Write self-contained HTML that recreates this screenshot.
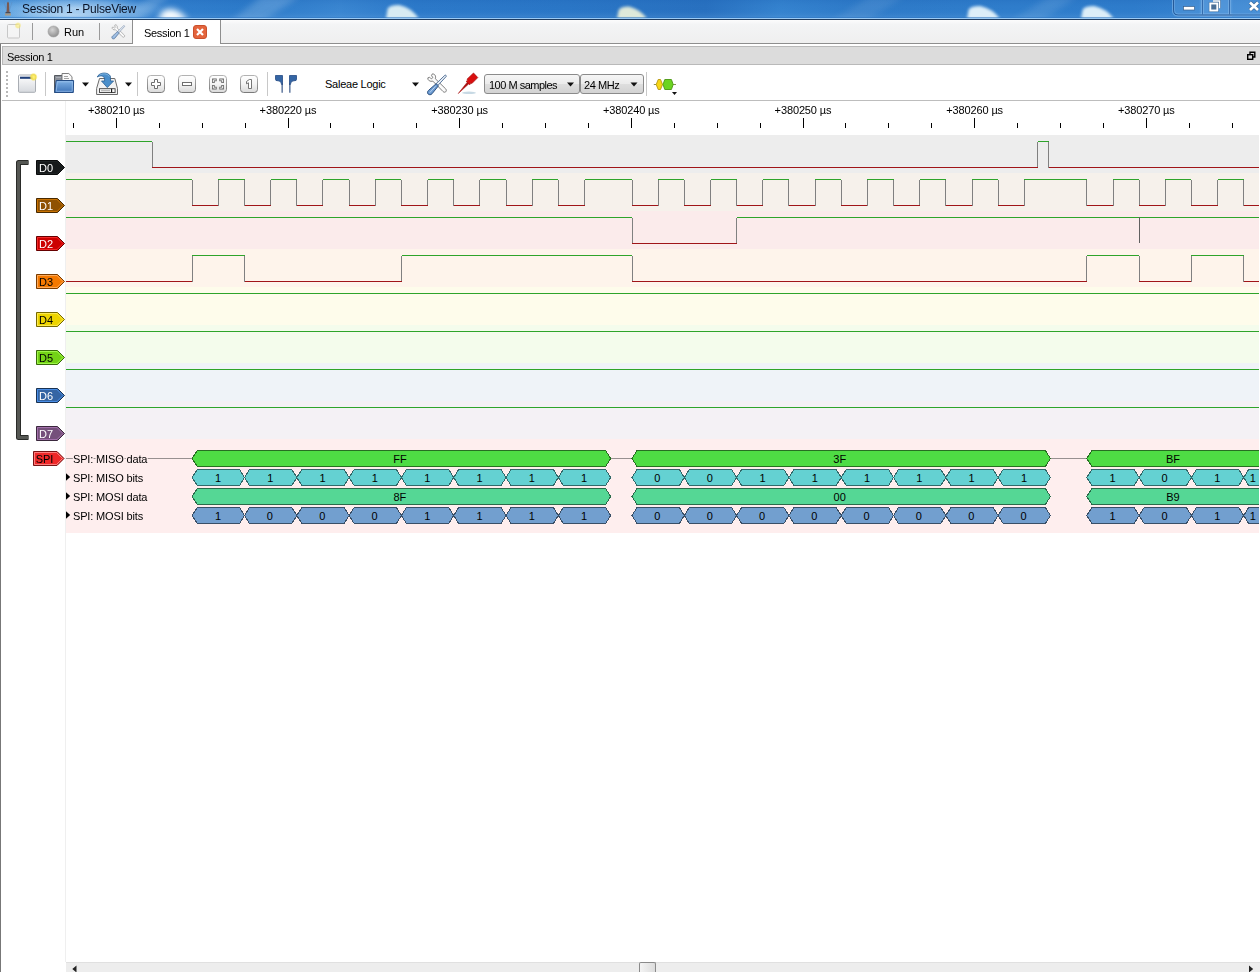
<!DOCTYPE html>
<html><head><meta charset="utf-8"><title>Session 1 - PulseView</title>
<style>
html,body{margin:0;padding:0;}
body{width:1260px;height:972px;overflow:hidden;background:#fff;font-family:"Liberation Sans",sans-serif;font-size:11px;color:#000;position:relative;}
.abs{position:absolute;}
#titlebar{left:0;top:0;width:1260px;height:19px;background:linear-gradient(180deg,#2b7ad0 0%,#3a88d6 60%,#4a93da 100%);overflow:hidden;}
#titleline{left:0;top:19px;width:1260px;height:1px;background:#203c5e;}
#tabbar{left:0;top:20px;width:1260px;height:23px;background:linear-gradient(180deg,#fcfcfc 0,#f3f4f5 20%,#efefef 100%);}
#tabline{left:0;top:43px;width:1260px;height:1px;background:#8e8e8e;}
#docktitle{left:2px;top:46px;width:1258px;height:19px;background:#dcdcdc;border:1px solid #b9b9b9;border-right:none;box-sizing:border-box;}
#leftedge{left:0;top:44px;width:1px;height:928px;background:#777;}
#tbline{left:2px;top:100px;width:1258px;height:1px;background:#bdbdbd;}
svg{position:absolute;left:0;top:0;}
svg text{font-family:"Liberation Sans",sans-serif;}
.txt{position:absolute;white-space:nowrap;line-height:1;}
</style></head><body>
<div id="titlebar" class="abs">
 <svg width="1260" height="19" viewBox="0 0 1260 19">
  <defs>
   <linearGradient id="tbg" x1="0" x2="1" y1="0" y2="0">
    <stop offset="0" stop-color="#5ea3e0"/><stop offset="0.05" stop-color="#4a94da"/><stop offset="0.12" stop-color="#327fcd"/><stop offset="0.2" stop-color="#2c7ac9"/>
    <stop offset="0.27" stop-color="#3a86d1"/><stop offset="0.33" stop-color="#2c79c9"/><stop offset="0.45" stop-color="#2a76c6"/><stop offset="0.56" stop-color="#2870bf"/><stop offset="0.62" stop-color="#3583cf"/><stop offset="0.68" stop-color="#2e7ac8"/><stop offset="0.8" stop-color="#2f7dcb"/><stop offset="0.9" stop-color="#2e7ccb"/><stop offset="1" stop-color="#3a86d2"/>
   </linearGradient>
   <linearGradient id="tbv" x1="0" x2="0" y1="0" y2="1">
    <stop offset="0" stop-color="#1c62b4" stop-opacity="0.25"/><stop offset="0.5" stop-color="#2c7ac9" stop-opacity="0"/><stop offset="1" stop-color="#8cc0ee" stop-opacity="0.25"/>
   </linearGradient>
   <radialGradient id="tglow" cx="0.5" cy="0.5" r="0.5"><stop offset="0" stop-color="#d8ebfa" stop-opacity="0.75"/><stop offset="0.6" stop-color="#a9d0f2" stop-opacity="0.45"/><stop offset="1" stop-color="#7fb6e8" stop-opacity="0"/></radialGradient>
   <filter id="bl" x="-30%" y="-60%" width="160%" height="220%"><feGaussianBlur stdDeviation="1.8"/></filter>
   <filter id="bl2" x="-30%" y="-60%" width="160%" height="220%"><feGaussianBlur stdDeviation="3"/></filter>
  </defs>
  <rect width="1260" height="19" fill="url(#tbg)"/>
  <rect width="1260" height="19" fill="url(#tbv)"/>
  <ellipse cx="78" cy="9" rx="88" ry="13" fill="url(#tglow)"/>
  <ellipse cx="70" cy="15" rx="75" ry="7" fill="url(#tglow)" opacity="0.8"/>
  <g filter="url(#bl2)" opacity="0.22" fill="#cfe6f8">
   <path d="M120 22L150 -4L170 -4L140 22Z"/>
   <path d="M230 22L262 -4L300 -4L262 22Z"/>
   <path d="M830 22L870 -4L905 -4L865 22Z" opacity="0.5"/>
   <path d="M1010 22L1050 -4L1078 -4L1040 22Z" opacity="0.6"/>
  </g>
  <g filter="url(#bl2)"><path d="M158 21L161 13Q164 8.500 172 9Q182 11 188 21Z" fill="#f4fbff"/><path d="M162 21L164 14Q168 11 174 12Q180 13 184 21Z" fill="#ffffff"/></g>
  <g filter="url(#bl)" opacity="0.92">
   <path d="M386 19L387.5 9Q389 5 399.2 5Q412.4 8 419 19Z" fill="#e6f5f6"/><path d="M617 19L618.5 10.5Q620 6.5 629.0 6.5Q641.0 9.5 647 19Z" fill="#eef3dc"/><path d="M967 19L968.5 10Q970 6 980.2 6Q993.4 9 1000 19Z" fill="#ecf8fc"/><path d="M1081 19L1082.5 10Q1084 6 1094.2 6Q1107.4 9 1114 19Z" fill="#ecf8fc"/>
  </g>
  <rect y="17" width="1260" height="1" fill="#2670c0" opacity="0.5"/><rect y="18" width="1260" height="1" fill="#9ccbf5"/>
 </svg>
</div>
<div id="titleline" class="abs"></div>
<div id="tabbar" class="abs"></div>
<div id="tabline" class="abs"></div>
<div class="abs" style="left:132px;top:20px;width:89px;height:24px;background:#fff;border:1px solid #8e8e8e;border-bottom:none;border-top:none;box-sizing:border-box;"></div>
<div id="docktitle" class="abs"></div>
<div id="leftedge" class="abs"></div>
<div id="tbline" class="abs"></div>

<div class="txt" id="t_title" style="left:22px;top:3px;font-size:12px;letter-spacing:-0.25px;color:#0a1428;">Session 1 - PulseView</div>
<div class="txt" id="t_run" style="left:64px;top:27px;font-size:11px;">Run</div>
<div class="txt" id="t_tab" style="left:144px;top:28px;font-size:11px;letter-spacing:-0.3px;">Session 1</div>
<div class="txt" id="t_dock" style="left:7px;top:52px;font-size:11px;letter-spacing:-0.3px;">Session 1</div>
<div class="txt" id="t_dev" style="left:325px;top:79px;font-size:11px;letter-spacing:-0.25px;">Saleae Logic</div>

<!-- chrome icons -->
<svg width="1260" height="102" viewBox="0 0 1260 102">
<defs>
 <linearGradient id="btn" x1="0" x2="0" y1="0" y2="1"><stop offset="0" stop-color="#ffffff"/><stop offset="0.5" stop-color="#f4f4f4"/><stop offset="1" stop-color="#d9d9d9"/></linearGradient>
 <linearGradient id="btnb" x1="0" x2="0" y1="0" y2="1"><stop offset="0" stop-color="#b2b2b2"/><stop offset="1" stop-color="#7a7a7a"/></linearGradient>
 <linearGradient id="fold" x1="0" x2="0" y1="0" y2="1"><stop offset="0" stop-color="#7fb0e4"/><stop offset="1" stop-color="#3d73b8"/></linearGradient>
 <linearGradient id="win" x1="0" x2="0" y1="0" y2="1"><stop offset="0" stop-color="#ffffff"/><stop offset="1" stop-color="#d6d9de"/></linearGradient>
 <radialGradient id="glow"><stop offset="0" stop-color="#fff27a"/><stop offset="0.6" stop-color="#f5e04a" stop-opacity="0.9"/><stop offset="1" stop-color="#f5e04a" stop-opacity="0"/></radialGradient>
 <radialGradient id="ball" cx="0.4" cy="0.35" r="0.7"><stop offset="0" stop-color="#d4d4d4"/><stop offset="1" stop-color="#8c8c8c"/></radialGradient>
 <linearGradient id="combo" x1="0" x2="0" y1="0" y2="1"><stop offset="0" stop-color="#f6f6f6"/><stop offset="0.5" stop-color="#ebebeb"/><stop offset="0.51" stop-color="#dedede"/><stop offset="1" stop-color="#d2d2d2"/></linearGradient>
</defs>
<!-- title bar app icon -->
<g>
 <path d="M7 3L8 1.5L9 3L9.5 12H6.5Z" fill="#7a5a52"/>
 <rect x="5.5" y="12" width="5" height="1.5" fill="#4a4a55"/>
 <rect x="5" y="13.5" width="6" height="2" fill="#a89a86"/>
 <path d="M4 2L6.5 10M12 2L9.5 10" stroke="#5f8fc4" stroke-width="1" opacity="0.6" fill="none"/>
</g>
<!-- window controls -->
<g>
 <path d="M1174.5 0V10.500Q1174.500 14.500 1178.500 14.500H1260V0Z" fill="#5fa0de" opacity="0.4"/>
 <path d="M1173.500 0V10.500Q1173.500 15 1178 15H1260" fill="none" stroke="#24548f" stroke-width="1" opacity="0.85"/>
 <path d="M1172.500 0V10.500Q1172.500 16 1178 16H1260" fill="none" stroke="#8cbcea" stroke-width="1" opacity="0.6"/>
 <path d="M1174.500 0V10.500Q1174.500 14 1178 14H1260" fill="none" stroke="#8cbcea" stroke-width="1" opacity="0.45"/>
 <path d="M1202.500 0V14.500M1229.500 0V14.500" stroke="#2c5f9e" stroke-width="1" opacity="0.7"/>
 <path d="M1203.500 0V14M1230.500 0V14M1201.500 0V14M1228.500 0V14" stroke="#9cc6ee" stroke-width="1" opacity="0.4"/>
 <rect x="1183.500" y="6.500" width="11" height="3.500" fill="#fff" stroke="#3a5f8a" stroke-width="0.7"/>
 <path d="M1213 1H1219.500V8.300" fill="none" stroke="#35587f" stroke-width="2.600" opacity="0.7"/>
 <path d="M1213 1H1219.500V8.300" fill="none" stroke="#fff" stroke-width="1.500"/>
 <rect x="1210.300" y="3.500" width="7" height="7" fill="none" stroke="#35587f" stroke-width="3" opacity="0.6"/>
 <rect x="1210.300" y="3.500" width="7" height="7" fill="#4a6f96" stroke="#fff" stroke-width="1.900"/>
 <path d="M1250 2.500L1258 10M1258 2.500L1250 10" stroke="#3a5f8a" stroke-width="4" fill="none" opacity="0.8"/>
 <path d="M1250 2.500L1258 10M1258 2.500L1250 10" stroke="#fff" stroke-width="2.700" fill="none"/>
</g>
<!-- tab bar: disabled new-window icon -->
<g opacity="0.8">
 <rect x="7.5" y="24.5" width="12" height="13.500" rx="1" fill="#f6f6f6" stroke="#bdbdbd"/>
 <circle cx="18" cy="25.5" r="3.5" fill="url(#glow)" opacity="0.7"/>
</g>
<path d="M32.5 23V40M99.5 23V40" stroke="#9a9a9a" stroke-width="1" fill="none"/>
<circle cx="53.5" cy="31.5" r="5.5" fill="url(#ball)" stroke="#a0a0a0" stroke-width="0.6"/>
<!-- tab bar: faded settings icon -->
<g opacity="0.75" transform="translate(111.5,24.5) scale(0.68)">
 
 <g>
  <path d="M5.300 0.400C7.800 0.200 9.300 2.800 8.300 5.200L18.700 15.400C19.600 16.400 19.500 17.600 18.700 18.300C17.900 19 16.800 18.800 16 18L5.800 7.600C3.300 8.500 0.600 6.900 0.800 4.400L2.600 3.700L4.300 5.400L5.900 4L4.500 2.200Z" fill="#fbfbfb" stroke="#6f6f6f" stroke-width="0.9" stroke-linejoin="round"/>
  <path d="M17.800 1.800C18.600 1.200 19.600 2.100 19.200 3L10.800 12L9 10.300Z" fill="#e8eef5" stroke="#4a6a93" stroke-width="0.9"/>
  <path d="M9.200 10.200L11.400 12.400L5 20.300C3.800 21.600 2 21.500 1.100 20.500C0.200 19.500 0.300 17.900 1.600 16.800Z" fill="#6a9ad2" stroke="#2f527f" stroke-width="1"/>
  <path d="M3 18.800L8.300 13" stroke="#b8d2ee" stroke-width="1" fill="none" stroke-linecap="round"/>
 </g>

</g>
<!-- tab close button -->
<rect x="193.5" y="25.5" width="13" height="13" rx="2.5" fill="#e4643c" stroke="#c9502c"/>
<path d="M197 29L203 35M203 29L197 35" stroke="#fff" stroke-width="2.2" fill="none"/>
<!-- dock float icon -->
<g fill="none" stroke="#000" stroke-width="1.4">
 <path d="M1250 54V52.2H1254.8V57H1253"/>
 <rect x="1247.7" y="54.7" width="5" height="4.6" fill="#dcdcdc"/>
</g>
<!-- toolbar handle -->
<g fill="#b8b8b8">
 <rect x="6" y="71" width="2" height="2"/><rect x="6" y="75" width="2" height="2"/><rect x="6" y="79" width="2" height="2"/><rect x="6" y="83" width="2" height="2"/><rect x="6" y="87" width="2" height="2"/><rect x="6" y="91" width="2" height="2"/><rect x="6" y="95" width="2" height="2"/>
</g>
<!-- new window icon -->
<rect x="18.5" y="75" width="17" height="17.300" rx="1" fill="url(#win)" stroke="#a9adb3"/>
<rect x="20" y="76.700" width="13" height="2.100" fill="#1f3f7a"/>
<circle cx="33.5" cy="77" r="4.2" fill="url(#glow)"/>
<!-- separators -->
<path d="M45.5 72V96M137.5 72V96M267.5 72V96M646.5 72V96" stroke="#c8c8c8" fill="none"/>
<!-- open icon -->
<g>
 <path d="M54.500 75.500H62.500V81H72.500V92.500H54.500Z" fill="#8a8f98" stroke="#55595f"/>
 <path d="M56 77.500H61" stroke="#a9adb4" fill="none"/>
 <path d="M62 73.500H68.800L72 76.700V84H62Z" fill="#fafafa" stroke="#6f6f6f" stroke-width="0.9"/>
 <path d="M64 76.500H68M64 78.500H69" stroke="#9a9a9a" fill="none" stroke-width="0.9"/>
 <path d="M56.200 80.500H73.600L73.300 92.500H54.700Z" fill="url(#fold)" stroke="#244d86" stroke-linejoin="round"/>
 <path d="M57.300 81.800H72.400L72.200 91.300H56.200Z" fill="none" stroke="#a6c8ef" stroke-width="0.8" opacity="0.8"/>
</g>
<path d="M82 82.500H89L85.500 86.500Z" fill="#111"/>
<!-- save icon -->
<g>
 <path d="M99.500 78.500H114.800L117.500 88.500V94.500H96.600V88.500Z" fill="#f3f3f3" stroke="#6a6a6a" stroke-linejoin="round"/>
 <rect x="99.500" y="88.700" width="15.600" height="3.800" fill="#f8f8f8" stroke="#3c3c3c" stroke-width="0.9"/>
 <path d="M101 90.600H110" stroke="#b9b9b9" stroke-width="1.400" fill="none"/>
 <path d="M111.600 88.700V92.500" stroke="#111" stroke-width="1.100" fill="none"/>
 <path d="M97.300 77C98.500 73 107 71 110.300 76L110.600 81H113.600L107.300 87.600L101.500 81H104.600L104.500 78C103.200 75.300 99.500 75.500 97.300 77Z" fill="#4b8fcb" stroke="#2b6094" stroke-width="0.8" stroke-linejoin="round"/>
 <path d="M99.500 75.300C102 73.300 107.500 73 109.300 76.500" fill="none" stroke="#8fc0e8" stroke-width="0.8"/>
</g>
<path d="M125 82.500H132L128.500 86.500Z" fill="#111"/>
<!-- zoom buttons -->
<g>
 <rect x="147.500" y="75.500" width="17" height="17" rx="3.2" fill="url(#btn)" stroke="url(#btnb)"/><rect x="178.500" y="75.500" width="17" height="17" rx="3.2" fill="url(#btn)" stroke="url(#btnb)"/><rect x="209.500" y="75.500" width="17" height="17" rx="3.2" fill="url(#btn)" stroke="url(#btnb)"/><rect x="240.500" y="75.500" width="17" height="17" rx="3.2" fill="url(#btn)" stroke="url(#btnb)"/>
 <path d="M154.500 79.500H157.500V82.500H160.500V85.500H157.500V88.500H154.500V85.500H151.500V82.500H154.500Z" fill="#fff" stroke="#6e6e6e" stroke-width="1"/>
 <rect x="182.500" y="82.500" width="9" height="3" fill="#fff" stroke="#6e6e6e" stroke-width="1"/>
 <path d="M213.400 83V79.900H216.700M222.600 83V79.900H219.300M213.400 85V88.100H216.700M222.600 85V88.100H219.300" fill="none" stroke="#666" stroke-width="2.600"/>
 <path d="M213.400 82.200V79.900H215.900M222.600 82.200V79.900H220.100M213.400 85.800V88.100H215.900M222.600 85.800V88.100H220.100" fill="none" stroke="#fff" stroke-width="0.900"/>
 <path d="M246.500 81.500L249.300 79.500H251.500V88.500H248.500V82.800L246.500 83.800Z" fill="#fff" stroke="#666" stroke-width="0.9"/>
</g>
<!-- cursors icon -->
<g fill="#3465a4" stroke="#234a85" stroke-width="0.8">
 <path d="M275.500 75.500H282.500V84.500H281.700Q281.300 80.700 278 80.700H277Q275.500 80.700 275.500 79.200Z"/>
 <path d="M296.500 75.500H289.500V84.500H290.300Q290.700 80.700 294 80.700H295Q296.500 80.700 296.500 79.200Z"/>
</g>
<path d="M281.600 83.500H282.650V92.700H281.600ZM289.350 83.500H290.400V92.700H289.350Z" fill="#1f4178"/>
<!-- device dropdown arrow -->
<path d="M412 82.500H419L415.500 86.500Z" fill="#111"/>
<!-- tools icon -->

<g transform="translate(427,73.500)">
 <g>
  <path d="M5.300 0.400C7.800 0.200 9.300 2.800 8.300 5.200L18.700 15.400C19.600 16.400 19.500 17.600 18.700 18.300C17.900 19 16.800 18.800 16 18L5.800 7.600C3.300 8.500 0.600 6.900 0.800 4.400L2.600 3.700L4.300 5.400L5.900 4L4.500 2.200Z" fill="#fbfbfb" stroke="#6f6f6f" stroke-width="0.9" stroke-linejoin="round"/>
  <path d="M17.800 1.800C18.600 1.200 19.600 2.100 19.200 3L10.800 12L9 10.300Z" fill="#e8eef5" stroke="#4a6a93" stroke-width="0.9"/>
  <path d="M9.200 10.200L11.400 12.400L5 20.300C3.800 21.600 2 21.500 1.100 20.500C0.200 19.500 0.300 17.900 1.600 16.800Z" fill="#6a9ad2" stroke="#2f527f" stroke-width="1"/>
  <path d="M3 18.800L8.300 13" stroke="#b8d2ee" stroke-width="1" fill="none" stroke-linecap="round"/>
 </g>
</g>
<!-- probe icon -->
<g>
 <ellipse cx="469" cy="92.800" rx="7" ry="1.300" fill="#a9c4d6" opacity="0.65"/>
 <path d="M458.200 93.600L467.200 82.200L468.900 83.800Z" fill="#a80c0c" stroke="#a80c0c" stroke-width="0.5"/>
 <path d="M473.500 73L477.800 77.600L471.800 83.600L470.800 82.800L469.800 84.800L466.200 81.300L467.800 80.200L467 79.200Z" fill="#d90f0f" stroke="#a30b0b" stroke-width="0.7" stroke-linejoin="round"/>
</g>
<!-- combos -->
<rect x="484.500" y="74.500" width="95" height="19" rx="2.500" fill="url(#combo)" stroke="#8b8b8b"/>
<rect x="580.500" y="74.500" width="63" height="19" rx="2.500" fill="url(#combo)" stroke="#8b8b8b"/>
<path d="M567 82.500H574L570.500 86.500Z M630.500 82.500H637.500L634 86.500Z" fill="#111"/>
<!-- decoder icon -->
<g>
 <path d="M653.800 84.500H656.500M673 84.500H676" stroke="#8a8f55" fill="none"/>
 <path d="M656.200 84.500L658.200 79.500H660.500L662.500 84.500L660.500 89.500H658.200Z" fill="#f7d615" stroke="#b5960f" stroke-width="0.9"/>
 <path d="M663 84.500L664.800 79.500H671.400L673.200 84.500L671.400 89.500H664.800Z" fill="#6bd421" stroke="#4a9612" stroke-width="0.9"/>
 <path d="M672 92H677L674.500 95Z" fill="#111"/>
</g>

</svg>

<div class="txt" id="t_c1" style="left:489px;top:80px;font-size:11px;letter-spacing:-0.5px;z-index:5;">100 M samples</div>
<div class="txt" id="t_c2" style="left:584px;top:80px;font-size:11px;letter-spacing:-0.45px;z-index:5;">24 MHz</div>
<!-- trace view -->
<svg width="1260" height="972" viewBox="0 0 1260 972" shape-rendering="crispEdges">
<rect x="66" y="135" width="1193" height="38" fill="#EDEDED"/>
<rect x="66" y="173" width="1193" height="38" fill="#F6F1EB"/>
<rect x="66" y="211" width="1193" height="38" fill="#FBEBEB"/>
<rect x="66" y="249" width="1193" height="38" fill="#FEF4EB"/>
<rect x="66" y="287" width="1193" height="38" fill="#FEFCEB"/>
<rect x="66" y="325" width="1193" height="38" fill="#F4FCEC"/>
<rect x="66" y="363" width="1193" height="38" fill="#EFF3F8"/>
<rect x="66" y="401" width="1193" height="38" fill="#F4F1F5"/>
<rect x="66" y="439" width="1193" height="94" fill="#FEEEEE"/>
<path d="M152.3 141.5V167.5M1037.8 141.5V167.5M1048.6 141.5V167.5" stroke="#808080" fill="none"/>
<path d="M66.0 141.5H152.3M1037.8 141.5H1048.6" stroke="#2ea42a" fill="none"/>
<path d="M152.3 167.5H1037.8M1048.6 167.5H1259.0" stroke="#a01518" fill="none"/>
<path d="M192.2 179.5V205.5M218.3 179.5V205.5M244.5 179.5V205.5M270.6 179.5V205.5M296.8 179.5V205.5M322.9 179.5V205.5M349.1 179.5V205.5M375.2 179.5V205.5M401.4 179.5V205.5M427.5 179.5V205.5M453.7 179.5V205.5M479.8 179.5V205.5M506.0 179.5V205.5M532.1 179.5V205.5M558.3 179.5V205.5M584.5 179.5V205.5M632.0 179.5V205.5M658.1 179.5V205.5M684.3 179.5V205.5M710.5 179.5V205.5M736.6 179.5V205.5M762.8 179.5V205.5M788.9 179.5V205.5M815.0 179.5V205.5M841.2 179.5V205.5M867.4 179.5V205.5M893.5 179.5V205.5M919.6 179.5V205.5M945.8 179.5V205.5M972.0 179.5V205.5M998.1 179.5V205.5M1024.2 179.5V205.5M1086.8 179.5V205.5M1113.0 179.5V205.5M1139.1 179.5V205.5M1165.2 179.5V205.5M1191.4 179.5V205.5M1217.5 179.5V205.5M1243.7 179.5V205.5" stroke="#808080" fill="none"/>
<path d="M66.0 179.5H192.2M218.3 179.5H244.5M270.6 179.5H296.8M322.9 179.5H349.1M375.2 179.5H401.4M427.5 179.5H453.7M479.8 179.5H506.0M532.1 179.5H558.3M584.5 179.5H632.0M658.1 179.5H684.3M710.5 179.5H736.6M762.8 179.5H788.9M815.0 179.5H841.2M867.4 179.5H893.5M919.6 179.5H945.8M972.0 179.5H998.1M1024.2 179.5H1086.8M1113.0 179.5H1139.1M1165.2 179.5H1191.4M1217.5 179.5H1243.7" stroke="#2ea42a" fill="none"/>
<path d="M192.2 205.5H218.3M244.5 205.5H270.6M296.8 205.5H322.9M349.1 205.5H375.2M401.4 205.5H427.5M453.7 205.5H479.8M506.0 205.5H532.1M558.3 205.5H584.5M632.0 205.5H658.1M684.3 205.5H710.5M736.6 205.5H762.8M788.9 205.5H815.0M841.2 205.5H867.4M893.5 205.5H919.6M945.8 205.5H972.0M998.1 205.5H1024.2M1086.8 205.5H1113.0M1139.1 205.5H1165.2M1191.4 205.5H1217.5M1243.7 205.5H1259.0" stroke="#a01518" fill="none"/>
<path d="M632.0 217.5V243.5M736.6 217.5V243.5" stroke="#808080" fill="none"/>
<path d="M66.0 217.5H632.0M736.6 217.5H1259.0" stroke="#2ea42a" fill="none"/>
<path d="M632.0 243.5H736.6" stroke="#a01518" fill="none"/>
<path d="M192.2 255.5V281.5M244.5 255.5V281.5M401.6 255.5V281.5M632.0 255.5V281.5M1086.8 255.5V281.5M1139.1 255.5V281.5M1191.4 255.5V281.5M1243.7 255.5V281.5" stroke="#808080" fill="none"/>
<path d="M192.2 255.5H244.5M401.6 255.5H632.0M1086.8 255.5H1139.1M1191.4 255.5H1243.7" stroke="#2ea42a" fill="none"/>
<path d="M66.0 281.5H192.2M244.5 281.5H401.6M632.0 281.5H1086.8M1139.1 281.5H1191.4M1243.7 281.5H1259.0" stroke="#a01518" fill="none"/>
<path d="M66.0 293.5H1259.0" stroke="#2ea42a" fill="none"/>
<path d="M66.0 331.5H1259.0" stroke="#2ea42a" fill="none"/>
<path d="M66.0 369.5H1259.0" stroke="#2ea42a" fill="none"/>
<path d="M66.0 407.5H1259.0" stroke="#2ea42a" fill="none"/>
<path d="M1139.5 217V243" stroke="#606060" fill="none"/>
<path d="M66 458.5H192M611 458.5H632M1051 458.5H1087" stroke="#989090" fill="none"/>
<g font-size="11" fill="#000">
<polygon points="192.2,458.5 197.2,450.5 605.6,450.5 610.6,458.5 605.6,466.5 197.2,466.5" fill="#4EDC44" stroke="#276E22"/>
<polygon points="192.2,496.5 197.2,488.5 605.6,488.5 610.6,496.5 605.6,504.5 197.2,504.5" fill="#55D795" stroke="#2A6B4A"/>
<text x="399.9" y="462.5" text-anchor="middle">FF</text>
<text x="399.9" y="500.5" text-anchor="middle">8F</text>
<polygon points="192.2,477.5 197.2,469.5 239.5,469.5 244.5,477.5 239.5,485.5 197.2,485.5" fill="#64D1D2" stroke="#326869"/><text x="218.0" y="481.5" text-anchor="middle">1</text>
<polygon points="244.5,477.5 249.5,469.5 291.8,469.5 296.8,477.5 291.8,485.5 249.5,485.5" fill="#64D1D2" stroke="#326869"/><text x="270.3" y="481.5" text-anchor="middle">1</text>
<polygon points="296.8,477.5 301.8,469.5 344.1,469.5 349.1,477.5 344.1,485.5 301.8,485.5" fill="#64D1D2" stroke="#326869"/><text x="322.6" y="481.5" text-anchor="middle">1</text>
<polygon points="349.1,477.5 354.1,469.5 396.4,469.5 401.4,477.5 396.4,485.5 354.1,485.5" fill="#64D1D2" stroke="#326869"/><text x="374.9" y="481.5" text-anchor="middle">1</text>
<polygon points="401.4,477.5 406.4,469.5 448.7,469.5 453.7,477.5 448.7,485.5 406.4,485.5" fill="#64D1D2" stroke="#326869"/><text x="427.2" y="481.5" text-anchor="middle">1</text>
<polygon points="453.7,477.5 458.7,469.5 501.0,469.5 506.0,477.5 501.0,485.5 458.7,485.5" fill="#64D1D2" stroke="#326869"/><text x="479.5" y="481.5" text-anchor="middle">1</text>
<polygon points="506.0,477.5 511.0,469.5 553.3,469.5 558.3,477.5 553.3,485.5 511.0,485.5" fill="#64D1D2" stroke="#326869"/><text x="531.9" y="481.5" text-anchor="middle">1</text>
<polygon points="558.3,477.5 563.3,469.5 605.6,469.5 610.6,477.5 605.6,485.5 563.3,485.5" fill="#64D1D2" stroke="#326869"/><text x="584.1" y="481.5" text-anchor="middle">1</text>
<polygon points="192.2,515.5 197.2,507.5 239.5,507.5 244.5,515.5 239.5,523.5 197.2,523.5" fill="#729FCF" stroke="#394F67"/><text x="218.0" y="519.5" text-anchor="middle">1</text>
<polygon points="244.5,515.5 249.5,507.5 291.8,507.5 296.8,515.5 291.8,523.5 249.5,523.5" fill="#729FCF" stroke="#394F67"/><text x="269.9" y="519.5" text-anchor="middle">0</text>
<polygon points="296.8,515.5 301.8,507.5 344.1,507.5 349.1,515.5 344.1,523.5 301.8,523.5" fill="#729FCF" stroke="#394F67"/><text x="322.2" y="519.5" text-anchor="middle">0</text>
<polygon points="349.1,515.5 354.1,507.5 396.4,507.5 401.4,515.5 396.4,523.5 354.1,523.5" fill="#729FCF" stroke="#394F67"/><text x="374.6" y="519.5" text-anchor="middle">0</text>
<polygon points="401.4,515.5 406.4,507.5 448.7,507.5 453.7,515.5 448.7,523.5 406.4,523.5" fill="#729FCF" stroke="#394F67"/><text x="427.2" y="519.5" text-anchor="middle">1</text>
<polygon points="453.7,515.5 458.7,507.5 501.0,507.5 506.0,515.5 501.0,523.5 458.7,523.5" fill="#729FCF" stroke="#394F67"/><text x="479.5" y="519.5" text-anchor="middle">1</text>
<polygon points="506.0,515.5 511.0,507.5 553.3,507.5 558.3,515.5 553.3,523.5 511.0,523.5" fill="#729FCF" stroke="#394F67"/><text x="531.9" y="519.5" text-anchor="middle">1</text>
<polygon points="558.3,515.5 563.3,507.5 605.6,507.5 610.6,515.5 605.6,523.5 563.3,523.5" fill="#729FCF" stroke="#394F67"/><text x="584.1" y="519.5" text-anchor="middle">1</text>
<polygon points="632.0,458.5 637.0,450.5 1045.4,450.5 1050.4,458.5 1045.4,466.5 637.0,466.5" fill="#4EDC44" stroke="#276E22"/>
<polygon points="632.0,496.5 637.0,488.5 1045.4,488.5 1050.4,496.5 1045.4,504.5 637.0,504.5" fill="#55D795" stroke="#2A6B4A"/>
<text x="839.7" y="462.5" text-anchor="middle">3F</text>
<text x="839.7" y="500.5" text-anchor="middle">00</text>
<polygon points="632.0,477.5 637.0,469.5 679.3,469.5 684.3,477.5 679.3,485.5 637.0,485.5" fill="#64D1D2" stroke="#326869"/><text x="657.4" y="481.5" text-anchor="middle">0</text>
<polygon points="684.3,477.5 689.3,469.5 731.6,469.5 736.6,477.5 731.6,485.5 689.3,485.5" fill="#64D1D2" stroke="#326869"/><text x="709.8" y="481.5" text-anchor="middle">0</text>
<polygon points="736.6,477.5 741.6,469.5 783.9,469.5 788.9,477.5 783.9,485.5 741.6,485.5" fill="#64D1D2" stroke="#326869"/><text x="762.5" y="481.5" text-anchor="middle">1</text>
<polygon points="788.9,477.5 793.9,469.5 836.2,469.5 841.2,477.5 836.2,485.5 793.9,485.5" fill="#64D1D2" stroke="#326869"/><text x="814.8" y="481.5" text-anchor="middle">1</text>
<polygon points="841.2,477.5 846.2,469.5 888.5,469.5 893.5,477.5 888.5,485.5 846.2,485.5" fill="#64D1D2" stroke="#326869"/><text x="867.1" y="481.5" text-anchor="middle">1</text>
<polygon points="893.5,477.5 898.5,469.5 940.8,469.5 945.8,477.5 940.8,485.5 898.5,485.5" fill="#64D1D2" stroke="#326869"/><text x="919.4" y="481.5" text-anchor="middle">1</text>
<polygon points="945.8,477.5 950.8,469.5 993.1,469.5 998.1,477.5 993.1,485.5 950.8,485.5" fill="#64D1D2" stroke="#326869"/><text x="971.6" y="481.5" text-anchor="middle">1</text>
<polygon points="998.1,477.5 1003.1,469.5 1045.4,469.5 1050.4,477.5 1045.4,485.5 1003.1,485.5" fill="#64D1D2" stroke="#326869"/><text x="1024.0" y="481.5" text-anchor="middle">1</text>
<polygon points="632.0,515.5 637.0,507.5 679.3,507.5 684.3,515.5 679.3,523.5 637.0,523.5" fill="#729FCF" stroke="#394F67"/><text x="657.4" y="519.5" text-anchor="middle">0</text>
<polygon points="684.3,515.5 689.3,507.5 731.6,507.5 736.6,515.5 731.6,523.5 689.3,523.5" fill="#729FCF" stroke="#394F67"/><text x="709.8" y="519.5" text-anchor="middle">0</text>
<polygon points="736.6,515.5 741.6,507.5 783.9,507.5 788.9,515.5 783.9,523.5 741.6,523.5" fill="#729FCF" stroke="#394F67"/><text x="762.0" y="519.5" text-anchor="middle">0</text>
<polygon points="788.9,515.5 793.9,507.5 836.2,507.5 841.2,515.5 836.2,523.5 793.9,523.5" fill="#729FCF" stroke="#394F67"/><text x="814.3" y="519.5" text-anchor="middle">0</text>
<polygon points="841.2,515.5 846.2,507.5 888.5,507.5 893.5,515.5 888.5,523.5 846.2,523.5" fill="#729FCF" stroke="#394F67"/><text x="866.6" y="519.5" text-anchor="middle">0</text>
<polygon points="893.5,515.5 898.5,507.5 940.8,507.5 945.8,515.5 940.8,523.5 898.5,523.5" fill="#729FCF" stroke="#394F67"/><text x="918.9" y="519.5" text-anchor="middle">0</text>
<polygon points="945.8,515.5 950.8,507.5 993.1,507.5 998.1,515.5 993.1,523.5 950.8,523.5" fill="#729FCF" stroke="#394F67"/><text x="971.2" y="519.5" text-anchor="middle">0</text>
<polygon points="998.1,515.5 1003.1,507.5 1045.4,507.5 1050.4,515.5 1045.4,523.5 1003.1,523.5" fill="#729FCF" stroke="#394F67"/><text x="1023.5" y="519.5" text-anchor="middle">0</text>
<polygon points="1086.8,458.5 1091.8,450.5 1500.2,450.5 1505.2,458.5 1500.2,466.5 1091.8,466.5" fill="#4EDC44" stroke="#276E22"/>
<polygon points="1086.8,496.5 1091.8,488.5 1500.2,488.5 1505.2,496.5 1500.2,504.5 1091.8,504.5" fill="#55D795" stroke="#2A6B4A"/>
<text x="1173.0" y="462.5" text-anchor="middle">BF</text>
<text x="1173.0" y="500.5" text-anchor="middle">B9</text>
<polygon points="1086.8,477.5 1091.8,469.5 1134.1,469.5 1139.1,477.5 1134.1,485.5 1091.8,485.5" fill="#64D1D2" stroke="#326869"/><text x="1112.6" y="481.5" text-anchor="middle">1</text>
<polygon points="1139.1,477.5 1144.1,469.5 1186.4,469.5 1191.4,477.5 1186.4,485.5 1144.1,485.5" fill="#64D1D2" stroke="#326869"/><text x="1164.5" y="481.5" text-anchor="middle">0</text>
<polygon points="1191.4,477.5 1196.4,469.5 1238.7,469.5 1243.7,477.5 1238.7,485.5 1196.4,485.5" fill="#64D1D2" stroke="#326869"/><text x="1217.2" y="481.5" text-anchor="middle">1</text>
<polygon points="1243.7,477.5 1248.7,469.5 1291.0,469.5 1296.0,477.5 1291.0,485.5 1248.7,485.5" fill="#64D1D2" stroke="#326869"/><text x="1252.8" y="481.5" text-anchor="middle">1</text>
<polygon points="1086.8,515.5 1091.8,507.5 1134.1,507.5 1139.1,515.5 1134.1,523.5 1091.8,523.5" fill="#729FCF" stroke="#394F67"/><text x="1112.6" y="519.5" text-anchor="middle">1</text>
<polygon points="1139.1,515.5 1144.1,507.5 1186.4,507.5 1191.4,515.5 1186.4,523.5 1144.1,523.5" fill="#729FCF" stroke="#394F67"/><text x="1164.5" y="519.5" text-anchor="middle">0</text>
<polygon points="1191.4,515.5 1196.4,507.5 1238.7,507.5 1243.7,515.5 1238.7,523.5 1196.4,523.5" fill="#729FCF" stroke="#394F67"/><text x="1217.2" y="519.5" text-anchor="middle">1</text>
<polygon points="1243.7,515.5 1248.7,507.5 1291.0,507.5 1296.0,515.5 1291.0,523.5 1248.7,523.5" fill="#729FCF" stroke="#394F67"/><text x="1252.8" y="519.5" text-anchor="middle">1</text>
</g>
<rect x="1259" y="130" width="1" height="832" fill="#fff"/>
</svg>
<svg width="1260" height="972" viewBox="0 0 1260 972">
<path d="M73.5 123V128M116.5 118V128M159.5 123V128M202.5 123V128M245.5 123V128M288.5 118V128M330.5 123V128M373.5 123V128M416.5 123V128M459.5 118V128M502.5 123V128M545.5 123V128M588.5 123V128M631.5 118V128M674.5 123V128M717.5 123V128M760.5 123V128M803.5 118V128M845.5 123V128M888.5 123V128M931.5 123V128M974.5 118V128M1017.5 123V128M1060.5 123V128M1103.5 123V128M1146.5 118V128M1189.5 123V128M1232.5 123V128" stroke="#000" fill="none"/>
<g font-size="11" fill="#000" letter-spacing="-0.12"><text x="116.3" y="114" text-anchor="middle">+380210 µs</text><text x="288.0" y="114" text-anchor="middle">+380220 µs</text><text x="459.6" y="114" text-anchor="middle">+380230 µs</text><text x="631.3" y="114" text-anchor="middle">+380240 µs</text><text x="803.0" y="114" text-anchor="middle">+380250 µs</text><text x="974.6" y="114" text-anchor="middle">+380260 µs</text><text x="1146.3" y="114" text-anchor="middle">+380270 µs</text></g>
<polygon points="36.5,160.5 57.5,160.5 64.5,167.5 57.5,174.5 36.5,174.5" fill="#16191A" stroke="#0b0c0d"/>
<polygon points="37.5,161.5 57,161.5 63,167.5 57,173.5 37.5,173.5" fill="none" stroke="#212527" stroke-opacity="0.8"/>
<text x="46" y="171.5" text-anchor="middle" fill="#fff" font-size="11">D0</text>
<polygon points="36.5,198.5 57.5,198.5 64.5,205.5 57.5,212.5 36.5,212.5" fill="#8F5202" stroke="#472900"/>
<polygon points="37.5,199.5 57,199.5 63,205.5 57,211.5 37.5,211.5" fill="none" stroke="#d67b02" stroke-opacity="0.8"/>
<text x="46" y="209.5" text-anchor="middle" fill="#fff" font-size="11">D1</text>
<polygon points="36.5,236.5 57.5,236.5 64.5,243.5 57.5,250.5 36.5,250.5" fill="#CC0000" stroke="#660000"/>
<polygon points="37.5,237.5 57,237.5 63,243.5 57,249.5 37.5,249.5" fill="none" stroke="#ff3333" stroke-opacity="0.8"/>
<text x="46" y="247.5" text-anchor="middle" fill="#fff" font-size="11">D2</text>
<polygon points="36.5,274.5 57.5,274.5 64.5,281.5 57.5,288.5 36.5,288.5" fill="#F57900" stroke="#7a3c00"/>
<polygon points="37.5,275.5 57,275.5 63,281.5 57,287.5 37.5,287.5" fill="none" stroke="#ffb670" stroke-opacity="0.8"/>
<text x="46" y="285.5" text-anchor="middle" fill="#000" font-size="11">D3</text>
<polygon points="36.5,312.5 57.5,312.5 64.5,319.5 57.5,326.5 36.5,326.5" fill="#EDD400" stroke="#766900"/>
<polygon points="37.5,313.5 57,313.5 63,319.5 57,325.5 37.5,325.5" fill="none" stroke="#ffee64" stroke-opacity="0.8"/>
<text x="46" y="323.5" text-anchor="middle" fill="#000" font-size="11">D4</text>
<polygon points="36.5,350.5 57.5,350.5 64.5,357.5 57.5,364.5 36.5,364.5" fill="#73D216" stroke="#39690b"/>
<polygon points="37.5,351.5 57,351.5 63,357.5 57,363.5 37.5,363.5" fill="none" stroke="#a9ff56" stroke-opacity="0.8"/>
<text x="46" y="361.5" text-anchor="middle" fill="#000" font-size="11">D5</text>
<polygon points="36.5,388.5 57.5,388.5 64.5,395.5 57.5,402.5 36.5,402.5" fill="#3465A4" stroke="#193252"/>
<polygon points="37.5,389.5 57,389.5 63,395.5 57,401.5 37.5,401.5" fill="none" stroke="#4d97f6" stroke-opacity="0.8"/>
<text x="46" y="399.5" text-anchor="middle" fill="#fff" font-size="11">D6</text>
<polygon points="36.5,426.5 57.5,426.5 64.5,433.5 57.5,440.5 36.5,440.5" fill="#75507B" stroke="#3a283d"/>
<polygon points="37.5,427.5 57,427.5 63,433.5 57,439.5 37.5,439.5" fill="none" stroke="#af78b8" stroke-opacity="0.8"/>
<text x="46" y="437.5" text-anchor="middle" fill="#fff" font-size="11">D7</text>
<polygon points="33.5,451.5 57,451.5 64,458.5 57,465.5 33.5,465.5" fill="#EF2929" stroke="#771414"/>
<polygon points="34.5,452.5 56.5,452.5 62.5,458.5 56.5,464.5 34.5,464.5" fill="none" stroke="#ff9393" stroke-opacity="0.8"/>
<text x="44.5" y="462.5" text-anchor="middle" fill="#000" font-size="11">SPI</text>
<path d="M28.5 162.5H18.5V437.5H28.5" fill="none" stroke="#2a2b29" stroke-width="5" stroke-linejoin="round"/>
<path d="M28.5 162.5H18.5V437.5H28.5" fill="none" stroke="#555753" stroke-width="3" stroke-linejoin="round"/>
<text x="73" y="462.5" font-size="11" fill="#000" letter-spacing="-0.15" stroke="#FEEEEE" stroke-width="2.6" stroke-linejoin="round" paint-order="stroke">SPI: MISO data</text>
<text x="73" y="481.5" font-size="11" fill="#000" letter-spacing="-0.15" stroke="#FEEEEE" stroke-width="2.6" stroke-linejoin="round" paint-order="stroke">SPI: MISO bits</text>
<path d="M66 473.2L70.2 477.0L66 480.8Z" fill="#000"/>
<text x="73" y="500.5" font-size="11" fill="#000" letter-spacing="-0.15" stroke="#FEEEEE" stroke-width="2.6" stroke-linejoin="round" paint-order="stroke">SPI: MOSI data</text>
<path d="M66 492.2L70.2 496.0L66 499.8Z" fill="#000"/>
<text x="73" y="519.5" font-size="11" fill="#000" letter-spacing="-0.15" stroke="#FEEEEE" stroke-width="2.6" stroke-linejoin="round" paint-order="stroke">SPI: MOSI bits</text>
<path d="M66 511.2L70.2 515.0L66 518.8Z" fill="#000"/>
</svg>

<div class="abs" style="left:65px;top:101px;width:1px;height:861px;background:#efefef;"></div>
<!-- scrollbar -->
<div class="abs" style="left:66px;top:962px;width:1194px;height:10px;background:#ededed;border-top:1px solid #e0e0e0;"></div>
<div class="abs" style="left:639px;top:962px;width:15px;height:10px;background:linear-gradient(90deg,#f4f4f4,#dcdcdc);border:1px solid #8a8a8a;border-bottom:none;border-radius:2px 2px 0 0;box-sizing:content-box;"></div>
<svg width="1260" height="972" viewBox="0 0 1260 972"><path d="M76.5 965.5L72.300 969L76.500 972.500ZM1249 965.500L1253.200 969L1249 972.500Z" fill="#222"/></svg>
</body></html>
